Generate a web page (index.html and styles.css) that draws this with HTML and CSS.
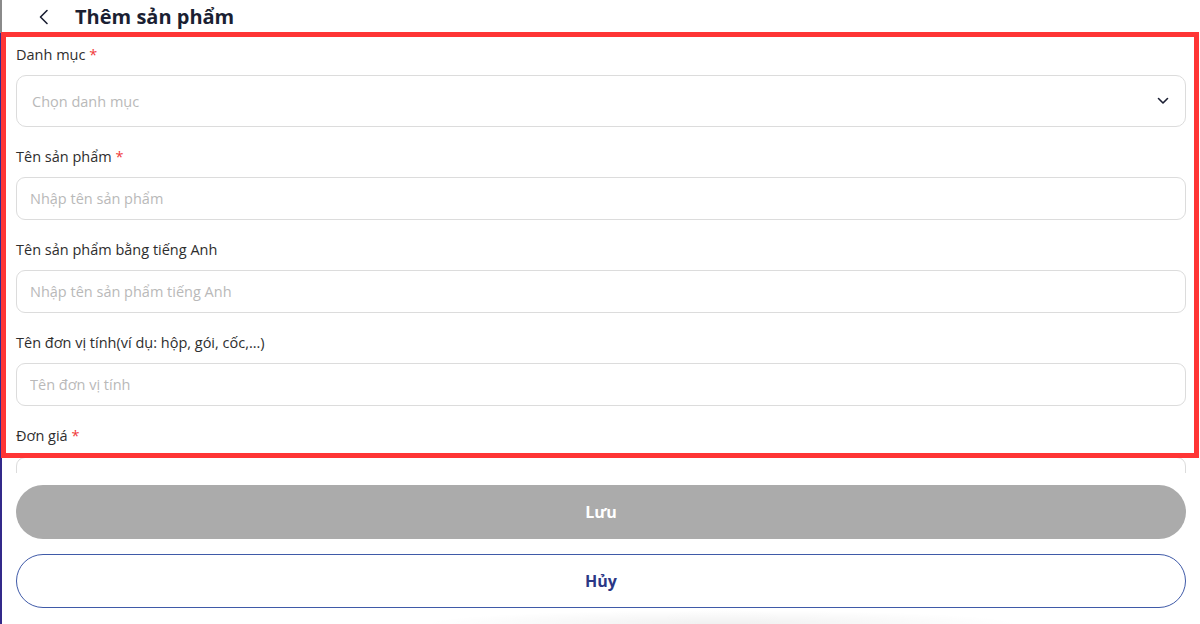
FILE: index.html
```html
<!DOCTYPE html>
<html lang="vi">
<head>
    <meta charset="UTF-8">
    <meta name="viewport" content="width=device-width, initial-scale=1.0">
    <title>Thêm sản phẩm</title>
    <link rel="stylesheet" href="styles.css">
</head>
<body>
    <div class="page">
        <div class="header">
            <button class="back-button" aria-label="Quay lại">
                <svg width="12" height="16" viewBox="0 0 12 16"><path d="M9 1.5 L2.5 8 L9 14.5" fill="none" stroke="#1b1f33" stroke-width="1.6" stroke-linecap="round" stroke-linejoin="round"/></svg>
            </button>
            <h1 class="title">Thêm sản phẩm</h1>
        </div>

        <div class="form-scroll">
            <form class="product-form">
                <div class="field">
                    <label class="field-label">Danh mục <span class="required">*</span></label>
                    <div class="select-box">
                        <span class="placeholder">Chọn danh mục</span>
                        <svg width="12" height="8" viewBox="0 0 12 8"><path d="M1.5 1.5 L6 6 L10.5 1.5" fill="none" stroke="#1b1f33" stroke-width="1.6" stroke-linecap="round" stroke-linejoin="round"/></svg>
                    </div>
                </div>
                <div class="field">
                    <label class="field-label">Tên sản phẩm <span class="required">*</span></label>
                    <input class="text-input" type="text" placeholder="Nhập tên sản phẩm">
                </div>
                <div class="field">
                    <label class="field-label">Tên sản phẩm bằng tiếng Anh</label>
                    <input class="text-input" type="text" placeholder="Nhập tên sản phẩm tiếng Anh">
                </div>
                <div class="field">
                    <label class="field-label">Tên đơn vị tính(ví dụ: hộp, gói, cốc,...)</label>
                    <input class="text-input" type="text" placeholder="Tên đơn vị tính">
                </div>
                <div class="field">
                    <label class="field-label">Đơn giá <span class="required">*</span></label>
                    <input class="text-input price-input" type="text" placeholder="Nhập đơn giá">
                </div>
            </form>
        </div>

        <div class="footer">
            <button class="save-button">Lưu</button>
            <button class="cancel-button">Hủy</button>
        </div>
    </div>
    <div class="highlight-box"></div>
</body>
</html>
```

FILE: styles.css
```css
* {
    box-sizing: border-box;
}
body {
    margin: 0;
    height: 100vh;
    width: 100vw;
    overflow: hidden;
    position: relative;
    background-color: #ffffff;
    font-family: "Open Sans", "Noto Sans", sans-serif;
}
.page {
    height: 624px;
    display: flex;
    flex-direction: column;
    border-left: 2px solid #33298a;
}
.header {
    height: 33px;
    flex-shrink: 0;
    display: flex;
    align-items: center;
    margin-left: -2px;
    border-left: 2px solid #8a8a8a;
    padding-left: 36px;
}
.back-button {
    background: none;
    border: none;
    padding: 0;
    width: 14px;
    height: 18px;
    display: flex;
    align-items: center;
    cursor: pointer;
}
.title {
    margin: 0 0 0 23px;
    font-size: 20px;
    font-weight: 700;
    color: #1b1f33;
    line-height: 33px;
}
.form-scroll {
    flex: 1;
    overflow: hidden;
    padding: 12px 14px 0 14px;
}
.product-form {
    display: flex;
    flex-direction: column;
    gap: 20px;
}
.field {
    display: flex;
    flex-direction: column;
    gap: 10px;
}
.field-label {
    font-size: 14.5px;
    line-height: 20px;
    color: #2e2e2e;
}
.required {
    color: #f03a3a;
}
.select-box {
    height: 52px;
    border: 1px solid #dcdcdc;
    border-radius: 10px;
    display: flex;
    align-items: center;
    justify-content: space-between;
    padding: 0 16px 0 15px;
}
.placeholder {
    font-size: 14.5px;
    color: #b9b9b9;
}
.text-input {
    height: 43px;
    border: 1px solid #dcdcdc;
    border-radius: 9px;
    padding: 0 13px;
    font-family: inherit;
    font-size: 14.5px;
    color: #333333;
    outline: none;
}
.text-input::placeholder {
    color: #b9b9b9;
}
.price-input {
    height: 52px;
    margin-top: 1px;
}
.footer {
    flex-shrink: 0;
    background-color: #ffffff;
    padding: 12px 14px 16px 14px;
    display: flex;
    flex-direction: column;
    gap: 15px;
    background-image: radial-gradient(ellipse 300px 14px at 720px 100%, rgba(0, 0, 0, 0.06), rgba(0, 0, 0, 0));
}
.save-button, .cancel-button {
    height: 54px;
    border-radius: 27px;
    font-family: inherit;
    font-size: 16px;
    font-weight: 700;
    cursor: pointer;
}
.save-button {
    background-color: #ababab;
    color: #ffffff;
    border: none;
}
.cancel-button {
    background-color: #ffffff;
    color: #2b3786;
    border: 1px solid #3f5aa8;
}
.highlight-box {
    position: absolute;
    left: 1px;
    top: 32px;
    width: 1198px;
    height: 426px;
    border: 5px solid #ff3535;
    pointer-events: none;
}
```
